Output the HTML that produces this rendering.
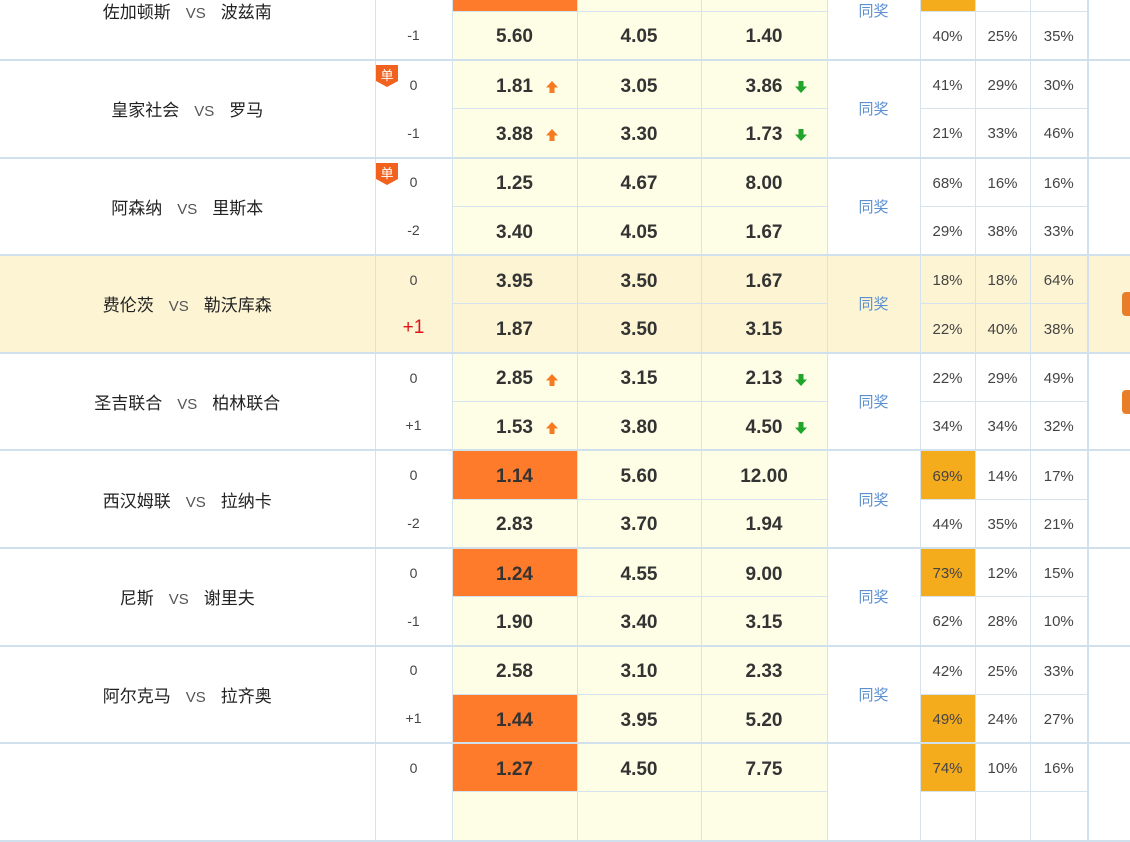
<!DOCTYPE html>
<html><head><meta charset="utf-8">
<style>
*{margin:0;padding:0;box-sizing:border-box}
body{width:1130px;height:780px;overflow:hidden;background:#fff;font-family:"Liberation Sans","Noto Sans CJK SC",sans-serif;position:relative}
table{position:absolute;left:0;top:-37.6px;width:1130px;border-collapse:collapse;table-layout:fixed}
td{height:48.8px;text-align:center;vertical-align:middle;border-right:1px solid #d5e3ee;padding:0;position:relative}
tr.b td,td.t,td.s,td.x{border-bottom:2px solid #d0e0ed}
tr.a td.o,tr.a td.p{border-bottom:1px solid #d5e3ee}
td.t{font-size:17px;color:#222}
td.t i{font-style:normal;font-size:15px;color:#555;margin:0 15px}
td.h{font-size:14px;color:#444}
td.h.r{color:#e0141e;font-size:19px}
td.o{background:#fefee6;font-size:19px;font-weight:bold;color:#333;padding-top:4px}
td.o.hl{background:#fe7b2c}
td.s{font-size:15px;color:#5a8fd0}
td.p{font-size:15px;color:#444;padding-top:2px}
td.p.hl{background:#f4ab1c}
td.x{border-right:none;border-left:2px solid #d0e0ed}
tr.y td{background:#fdf4d3}
tr.y td.o{background:#fdf4d3}
.up,.dn{position:absolute;top:19px;width:14px;height:14px}
.c1 .up,.c1 .dn{left:92px}
.c3 .up,.c3 .dn{left:92px}
.bd{position:absolute;left:0;top:4px;width:22px;height:22px}
.ic{position:absolute;right:0;width:8px;height:24px;background:#e87d2a;border-radius:4px 0 0 4px}
</style></head><body>
<svg width="0" height="0" style="position:absolute">
<defs>
<symbol id="u" viewBox="0 0 14 14"><path d="M7 1 L13 7.5 L9.5 7.5 L9.5 13 L4.5 13 L4.5 7.5 L1 7.5 Z" fill="#f57a20"/></symbol>
<symbol id="d" viewBox="0 0 14 14"><path d="M7 13 L13 6.5 L9.5 6.5 L9.5 1 L4.5 1 L4.5 6.5 L1 6.5 Z" fill="#1fa52a"/></symbol>
<symbol id="g" viewBox="0 0 22 22"><path d="M0 0 H22 V16 L11 22 L0 16 Z" fill="#f0621e"/><text x="11" y="15" font-size="13" fill="#fff" text-anchor="middle" font-family="Noto Sans CJK SC,sans-serif">单</text></symbol>
</defs></svg>
<table>
<colgroup><col style="width:375px"><col style="width:77px"><col style="width:125px"><col style="width:124px"><col style="width:126px"><col style="width:93px"><col style="width:55px"><col style="width:55px"><col style="width:58px"><col style="width:42px"></colgroup>

<tr class="a"><td class="t" rowspan="2">佐加顿斯<i>VS</i>波兹南</td><td class="h">0</td><td class="o hl"></td><td class="o"></td><td class="o"></td><td class="s" rowspan="2">同奖</td><td class="p hl"></td><td class="p"></td><td class="p"></td><td class="x" rowspan="2"></td></tr>
<tr class="b"><td class="h">-1</td><td class="o">5.60</td><td class="o">4.05</td><td class="o">1.40</td><td class="p">40%</td><td class="p">25%</td><td class="p">35%</td></tr>

<tr class="a"><td class="t" rowspan="2">皇家社会<i>VS</i>罗马</td><td class="h"><svg class="bd"><use href="#g"/></svg>0</td><td class="o c1">1.81<svg class="up"><use href="#u"/></svg></td><td class="o">3.05</td><td class="o c3">3.86<svg class="dn"><use href="#d"/></svg></td><td class="s" rowspan="2">同奖</td><td class="p">41%</td><td class="p">29%</td><td class="p">30%</td><td class="x" rowspan="2"></td></tr>
<tr class="b"><td class="h">-1</td><td class="o c1">3.88<svg class="up"><use href="#u"/></svg></td><td class="o">3.30</td><td class="o c3">1.73<svg class="dn"><use href="#d"/></svg></td><td class="p">21%</td><td class="p">33%</td><td class="p">46%</td></tr>

<tr class="a"><td class="t" rowspan="2">阿森纳<i>VS</i>里斯本</td><td class="h"><svg class="bd"><use href="#g"/></svg>0</td><td class="o">1.25</td><td class="o">4.67</td><td class="o">8.00</td><td class="s" rowspan="2">同奖</td><td class="p">68%</td><td class="p">16%</td><td class="p">16%</td><td class="x" rowspan="2"></td></tr>
<tr class="b"><td class="h">-2</td><td class="o">3.40</td><td class="o">4.05</td><td class="o">1.67</td><td class="p">29%</td><td class="p">38%</td><td class="p">33%</td></tr>

<tr class="a y"><td class="t" rowspan="2">费伦茨<i>VS</i>勒沃库森</td><td class="h">0</td><td class="o">3.95</td><td class="o">3.50</td><td class="o">1.67</td><td class="s" rowspan="2">同奖</td><td class="p">18%</td><td class="p">18%</td><td class="p">64%</td><td class="x" rowspan="2"><span class="ic" style="top:36px"></span></td></tr>
<tr class="b y"><td class="h r">+1</td><td class="o">1.87</td><td class="o">3.50</td><td class="o">3.15</td><td class="p">22%</td><td class="p">40%</td><td class="p">38%</td></tr>

<tr class="a"><td class="t" rowspan="2">圣吉联合<i>VS</i>柏林联合</td><td class="h">0</td><td class="o c1">2.85<svg class="up"><use href="#u"/></svg></td><td class="o">3.15</td><td class="o c3">2.13<svg class="dn"><use href="#d"/></svg></td><td class="s" rowspan="2">同奖</td><td class="p">22%</td><td class="p">29%</td><td class="p">49%</td><td class="x" rowspan="2"><span class="ic" style="top:36px"></span></td></tr>
<tr class="b"><td class="h">+1</td><td class="o c1">1.53<svg class="up"><use href="#u"/></svg></td><td class="o">3.80</td><td class="o c3">4.50<svg class="dn"><use href="#d"/></svg></td><td class="p">34%</td><td class="p">34%</td><td class="p">32%</td></tr>

<tr class="a"><td class="t" rowspan="2">西汉姆联<i>VS</i>拉纳卡</td><td class="h">0</td><td class="o hl">1.14</td><td class="o">5.60</td><td class="o">12.00</td><td class="s" rowspan="2">同奖</td><td class="p hl">69%</td><td class="p">14%</td><td class="p">17%</td><td class="x" rowspan="2"></td></tr>
<tr class="b"><td class="h">-2</td><td class="o">2.83</td><td class="o">3.70</td><td class="o">1.94</td><td class="p">44%</td><td class="p">35%</td><td class="p">21%</td></tr>

<tr class="a"><td class="t" rowspan="2">尼斯<i>VS</i>谢里夫</td><td class="h">0</td><td class="o hl">1.24</td><td class="o">4.55</td><td class="o">9.00</td><td class="s" rowspan="2">同奖</td><td class="p hl">73%</td><td class="p">12%</td><td class="p">15%</td><td class="x" rowspan="2"></td></tr>
<tr class="b"><td class="h">-1</td><td class="o">1.90</td><td class="o">3.40</td><td class="o">3.15</td><td class="p">62%</td><td class="p">28%</td><td class="p">10%</td></tr>

<tr class="a"><td class="t" rowspan="2">阿尔克马<i>VS</i>拉齐奥</td><td class="h">0</td><td class="o">2.58</td><td class="o">3.10</td><td class="o">2.33</td><td class="s" rowspan="2">同奖</td><td class="p">42%</td><td class="p">25%</td><td class="p">33%</td><td class="x" rowspan="2"></td></tr>
<tr class="b"><td class="h">+1</td><td class="o hl">1.44</td><td class="o">3.95</td><td class="o">5.20</td><td class="p hl">49%</td><td class="p">24%</td><td class="p">27%</td></tr>

<tr class="a"><td class="t" rowspan="2"></td><td class="h">0</td><td class="o hl">1.27</td><td class="o">4.50</td><td class="o">7.75</td><td class="s" rowspan="2"></td><td class="p hl">74%</td><td class="p">10%</td><td class="p">16%</td><td class="x" rowspan="2"></td></tr>
<tr class="b"><td class="h"></td><td class="o"></td><td class="o"></td><td class="o"></td><td class="p"></td><td class="p"></td><td class="p"></td></tr>
</table>
</body></html>
